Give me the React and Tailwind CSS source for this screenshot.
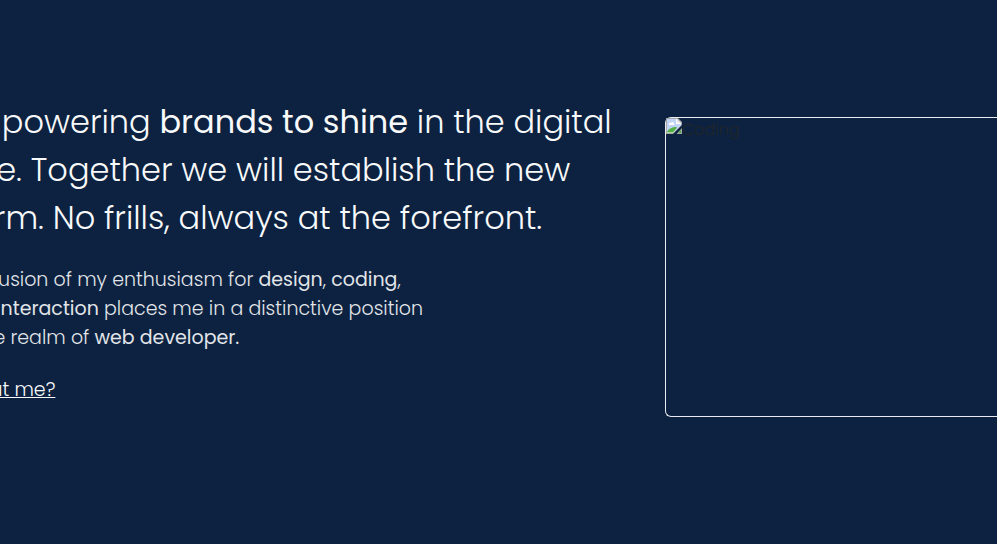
const headline = [
  [{ text: "Empowering " }, { text: "brands to shine", strong: true }, { text: " in the digital" }],
  [{ text: "age. Together we will establish the new" }],
  [{ text: "norm. No frills, always at the forefront." }],
];

const intro = [
  [{ text: "The fusion of my enthusiasm for " }, { text: "design", strong: true }, { text: ", " }, { text: "coding", strong: true }, { text: "," }],
  [{ text: "and " }, { text: "interaction", strong: true }, { text: " places me in a distinctive position" }],
  [{ text: "in the realm of " }, { text: "web developer.", strong: true }],
];

function Lines({ lines }) {
  return lines.map((parts, i) => (
    <span key={i} className="block whitespace-pre">
      {parts.map((part, j) =>
        part.strong ? (
          <strong key={j} className="font-normal">{part.text}</strong>
        ) : (
          <span key={j}>{part.text}</span>
        )
      )}
    </span>
  ));
}

function MissingPicture() {
  return (
    <svg width="16" height="16" viewBox="0 0 16 16" className="shrink-0" aria-hidden="true">
      <path d="M0 0H12L16 4V7L7 16H0Z" fill="#a6a6a6" />
      <path d="M1 1H11V5H15V7L7 15H1Z" fill="#fff" />
      <path d="M1 1H10V6H15V7L8 14H1Z" fill="#c0d4f7" />
      <path d="M3 6C3 4.5 4.5 4.5 5 5C5.5 3.5 8 4 7.8 5.6C8.6 5.6 8.6 7 8 7H3Z" fill="#fff" />
      <path d="M1 14C3 11 7 8 11 9.5L7 14.5H1Z" fill="#52b043" />
      <path d="M11 1L15 5H11Z" fill="#ededed" />
      <path d="M16 10V16H10.5Z" fill="#a6a6a6" />
      <path d="M15 12V15H12Z" fill="#52b043" />
    </svg>
  );
}

export default function App() {
  return (
    <main className="flex min-h-screen items-start overflow-hidden bg-[#0c2240] font-['Poppins',sans-serif] font-light">
      <section className="-ml-[47px] mr-[47px] flex w-2/3 shrink-0 flex-col items-start gap-[23px] pt-[98px]">
        <h1 className="text-[32px] leading-[48px] text-[#f8f9fa]">
          <Lines lines={headline} />
        </h1>
        <p className="text-[19px] leading-[29px] text-[#e2e5e9]">
          <Lines lines={intro} />
        </p>
        <a href="#about" className="text-[19px] leading-[29px] text-[#f8f9fa] underline">
          About me?
        </a>
      </section>
      <figure
        role="img"
        aria-label="Coding"
        className="mt-[117px] flex h-[300px] flex-1 items-start rounded-l-md border border-r-0 border-[#e9ecef] text-base text-[#212529]"
      >
        <MissingPicture />
        <span>Coding</span>
      </figure>
    </main>
  );
}
